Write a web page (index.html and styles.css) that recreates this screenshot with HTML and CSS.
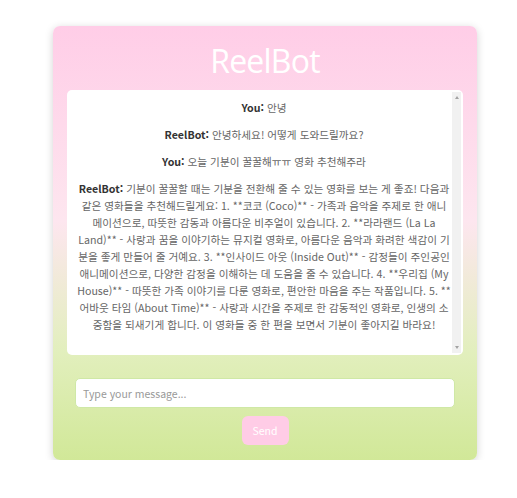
FILE: index.html
```html
<!DOCTYPE html>
<html lang="ko">
<head>
	<meta charset="UTF-8">
	<meta name="viewport" content="width=device-width, initial-scale=1.0">
	<title>ReelBot</title>
	<link rel="stylesheet" href="styles.css">
</head>
<body>
	<div class="container">
		<h1 class="title">ReelBot</h1>

		<div class="chat-box">
			<div class="messages">
				<p class="msg"><b>You:</b> 안녕</p>
				<p class="msg"><b>ReelBot:</b> 안녕하세요! 어떻게 도와드릴까요?</p>
				<p class="msg"><b>You:</b> 오늘 기분이 꿀꿀해ㅠㅠ 영화 추천해주라</p>
				<p class="msg"><b>ReelBot:</b> 기분이 꿀꿀할 때는 기분을 전환해 줄 수 있는 영화를 보는 게 좋죠! 다음과 같은 영화들을 추천해드릴게요: 1. **코코 (Coco)** - 가족과 음악을 주제로 한 애니메이션으로, 따뜻한 감동과 아름다운 비주얼이 있습니다. 2. **라라랜드 (La La Land)** - 사랑과 꿈을 이야기하는 뮤지컬 영화로, 아름다운 음악과 화려한 색감이 기분을 좋게 만들어 줄 거예요. 3. **인사이드 아웃 (Inside Out)** - 감정들이 주인공인 애니메이션으로, 다양한 감정을 이해하는 데 도움을 줄 수 있습니다. 4. **우리집 (My House)** - 따뜻한 가족 이야기를 다룬 영화로, 편안한 마음을 주는 작품입니다. 5. **어바웃 타임 (About Time)** - 사랑과 시간을 주제로 한 감동적인 영화로, 인생의 소중함을 되새기게 합니다. 이 영화들 중 한 편을 보면서 기분이 좋아지길 바라요!</p>
			</div>
			<div class="scroll-track">
				<span class="arrow up"></span>
				<span class="arrow down"></span>
			</div>
		</div>

		<form action="" class="input-area">
			<input type="text" name="message" class="input" placeholder="Type your message...">
			<button type="button" class="btn-send">Send</button>
		</form>
	</div>
</body>
</html>
```

FILE: styles.css
```css
body{
	margin:0;
	background:#fff;
	font-family:"Noto Sans CJK KR", "Noto Sans", sans-serif;
}
.container{
	width:396px;
	margin:26px 0 0 53px;
	padding:0 14px 15px;
	border-radius:7px;
	background:linear-gradient(to bottom, #ffcde7 0%, #fde6ef 45%, #e2efbd 75%, #d1e898 100%);
	box-shadow:0 2px 8px rgba(0,0,0,0.18);
}
.title{
	margin:0;
	height:64px;
	line-height:70px;
	text-align:center;
	color:#fff;
	font-family:"Open Sans", sans-serif;
	font-weight:400;
	font-size:32px;
	letter-spacing:-0.8px;
}
/* 채팅 영역 + 스크롤 트랙 */
.chat-box{
	display:flex;
	height:265px;
	box-sizing:border-box;
	padding:2px 2px 2px 10px;
	background:#fff;
	border-radius:5px;
}
.messages{
	flex:1;
	padding-top:7px;
	overflow:hidden;
}
.scroll-track{
	width:9px;
	margin-left:1px;
	background:#f1f1f1;
	display:flex;
	flex-direction:column;
	justify-content:space-between;
	align-items:center;
	padding:4px 0;
}
.arrow{
	width:0;
	height:0;
	border-left:2.5px solid transparent;
	border-right:2.5px solid transparent;
}
.arrow.up{
	border-bottom:3px solid #a3a3a3;
}
.arrow.down{
	border-top:3px solid #a3a3a3;
}
.msg{
	margin:0 0 10px;
	text-align:center;
	font-size:10.65px;
	line-height:17px;
	color:#666;
}
.msg b{
	color:#333;
	font-weight:700;
}
.input-area{
	display:flex;
	flex-direction:column;
	align-items:center;
	gap:8px;
	padding:23px 8px 0;
}
.input{
	display:block;
	width:100%;
	box-sizing:border-box;
	height:30px;
	padding:0 7px;
	border:1px solid #cfe8a6;
	border-radius:5px;
	background:#fff;
	font-family:inherit;
	font-size:10.5px;
	outline:none;
}
.input::placeholder{
	color:#999;
}
.btn-send{
	width:47px;
	height:29px;
	border:none;
	border-radius:6px;
	background:#ffcce6;
	color:#fff;
	font-family:inherit;
	font-size:10.5px;
	cursor:pointer;
}
```
